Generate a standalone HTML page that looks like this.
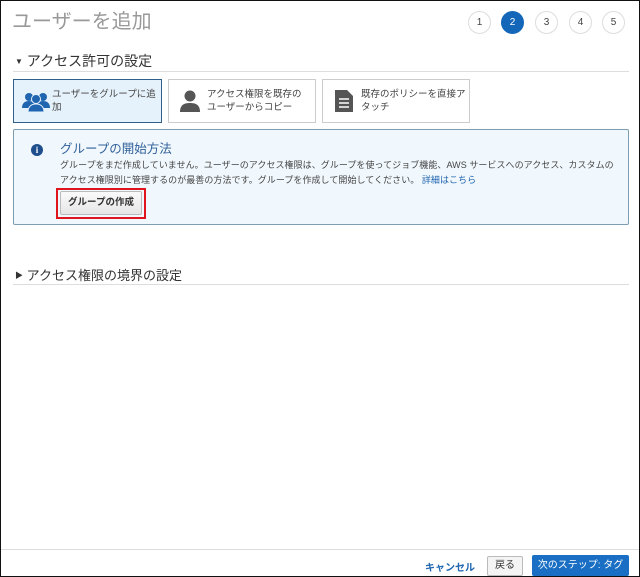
<!DOCTYPE html>
<html><head><meta charset="utf-8"><style>
*{box-sizing:border-box;margin:0;padding:0}
body{width:640px;height:577px;overflow:hidden;background:#fff;font-family:"Liberation Sans","Noto Sans CJK JP",sans-serif;position:relative}
.frame{position:absolute;left:0;top:0;width:640px;height:577px;border:1px solid #111}
.abs{position:absolute}
.step{position:absolute;top:11px;width:23px;height:23px;border-radius:50%;border:1px solid #ddd;background:#fff;font-size:10px;color:#444;text-align:center;line-height:21px}
.card{position:absolute;top:79px;height:44px;border:1px solid #ccc;background:#fff;font-size:9.5px;color:#444;line-height:13px}
.card span{position:absolute;left:38px;top:8px;white-space:nowrap}
</style></head><body>
<div class="frame"></div>
<div class="abs" style="left:12px;top:5px;font-size:20px;color:#999">ユーザーを追加</div>
<div class="step" style="left:468px">1</div>
<div class="step" style="left:501px;background:#1466b8;border-color:#1466b8;color:#fff">2</div>
<div class="step" style="left:535px">3</div>
<div class="step" style="left:569px">4</div>
<div class="step" style="left:602px">5</div>
<div class="abs" style="left:15px;top:51px;font-size:14px;color:#333"><span style="font-size:8px;vertical-align:2px">▼</span> アクセス許可の設定</div>
<div class="abs" style="left:13px;top:71px;width:616px;height:1px;background:#ddd"></div>
<div class="card" style="left:13px;width:149px;background:#e6f2fb;border:1px solid #2f5f8a">
<svg class="abs" style="left:8px;top:10px" width="28" height="22" viewBox="0 0 28 22"><g fill="#1f65b0"><circle cx="7" cy="7" r="4"/><circle cx="21" cy="7" r="4"/><path d="M0 18c0-5 3-7 7-7s7 2 7 7z"/><path d="M14 18c0-5 3-7 7-7s7 2 7 7z"/><circle cx="14" cy="9" r="4.5" stroke="#e6f2fb" stroke-width="1"/><path d="M6 22c0-6 4-8 8-8s8 2 8 8z" stroke="#e6f2fb" stroke-width="1"/></g></svg>
<span>ユーザーをグループに追<br>加</span></div>
<div class="card" style="left:168px;width:148px">
<svg class="abs" style="left:11px;top:10px" width="20" height="22" viewBox="0 0 20 22"><g fill="#555"><circle cx="10" cy="6" r="5.5"/><path d="M0 22c0-7 4-9 10-9s10 2 10 9z"/></g></svg>
<span>アクセス権限を既存の<br>ユーザーからコピー</span></div>
<div class="card" style="left:322px;width:148px">
<svg class="abs" style="left:12px;top:10px" width="18" height="22" viewBox="0 0 18 22"><path d="M0 0h12l6 6v16H0z" fill="#555"/><g stroke="#fff" stroke-width="1.5"><path d="M4 9h10M4 13h10M4 17h10"/></g></svg>
<span>既存のポリシーを直接ア<br>タッチ</span></div>
<div class="abs" style="left:13px;top:129px;width:616px;height:96px;background:#f1f8fd;border:1px solid #7d9cb0;border-radius:2px"></div>
<div class="abs" style="left:31px;top:144px;width:12px;height:12px;border-radius:50%;background:#1f4e8c;color:#fff;font-size:9px;font-weight:bold;text-align:center;line-height:12px;font-family:'Liberation Serif',serif">i</div>
<div class="abs" style="left:60px;top:141px;font-size:12.5px;color:#2f5f99;line-height:16px">グループの開始方法</div>
<div class="abs" style="left:60px;top:158px;font-size:9px;letter-spacing:0.05px;color:#444;line-height:15px;white-space:nowrap">グループをまだ作成していません。ユーザーのアクセス権限は、グループを使ってジョブ機能、AWS サービスへのアクセス、カスタムの<br>アクセス権限別に管理するのが最善の方法です。グループを作成して開始してください。 <span style="color:#1f65b0">詳細はこちら</span></div>
<div class="abs" style="left:56px;top:188px;width:90px;height:31px;border:2px solid #e0141c"></div>
<div class="abs" style="left:60px;top:191px;width:82px;height:24px;border:1px solid #bbb;border-radius:2px;background:linear-gradient(#fafafa,#e6e6e6);font-size:9.5px;font-weight:bold;color:#333;text-align:center;line-height:22px">グループの作成</div>
<div class="abs" style="left:15px;top:265px;font-size:13px;color:#333"><span style="font-size:8px;vertical-align:2px">▶</span> アクセス権限の境界の設定</div>
<div class="abs" style="left:13px;top:284px;width:616px;height:1px;background:#ddd"></div>
<div class="abs" style="left:1px;top:549px;width:638px;height:1px;background:#ddd"></div>
<div class="abs" style="left:425px;top:559px;font-size:10px;color:#1f65b0;font-weight:bold">キャンセル</div>
<div class="abs" style="left:487px;top:556px;width:36px;height:20px;border:1px solid #bbb;border-radius:2px;background:#f4f4f4;font-size:10px;color:#333;text-align:center;line-height:18px">戻る</div>
<div class="abs" style="left:532px;top:555px;width:97px;height:21px;border-radius:2px;background:#1a6fc4;font-size:10px;color:#fff;text-align:center;line-height:21px">次のステップ: タグ</div>
</body></html>
